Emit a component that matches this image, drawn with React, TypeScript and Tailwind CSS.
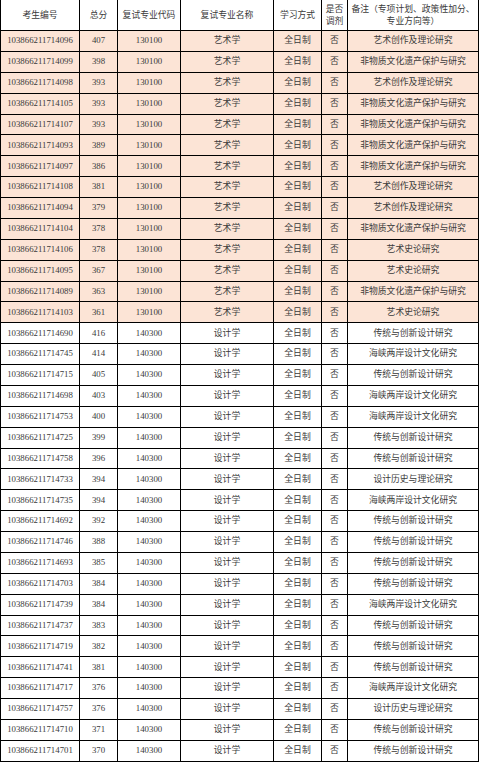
import React from 'react'

type Row = [string, string, string, string, string, string, string]

const art: Row[] = [
  ['103866211714096', '407', '130100', '艺术学', '全日制', '否', '艺术创作及理论研究'],
  ['103866211714099', '398', '130100', '艺术学', '全日制', '否', '非物质文化遗产保护与研究'],
  ['103866211714098', '393', '130100', '艺术学', '全日制', '否', '艺术创作及理论研究'],
  ['103866211714105', '393', '130100', '艺术学', '全日制', '否', '非物质文化遗产保护与研究'],
  ['103866211714107', '393', '130100', '艺术学', '全日制', '否', '非物质文化遗产保护与研究'],
  ['103866211714093', '389', '130100', '艺术学', '全日制', '否', '非物质文化遗产保护与研究'],
  ['103866211714097', '386', '130100', '艺术学', '全日制', '否', '非物质文化遗产保护与研究'],
  ['103866211714108', '381', '130100', '艺术学', '全日制', '否', '艺术创作及理论研究'],
  ['103866211714094', '379', '130100', '艺术学', '全日制', '否', '艺术创作及理论研究'],
  ['103866211714104', '378', '130100', '艺术学', '全日制', '否', '非物质文化遗产保护与研究'],
  ['103866211714106', '378', '130100', '艺术学', '全日制', '否', '艺术史论研究'],
  ['103866211714095', '367', '130100', '艺术学', '全日制', '否', '艺术史论研究'],
  ['103866211714089', '363', '130100', '艺术学', '全日制', '否', '非物质文化遗产保护与研究'],
  ['103866211714103', '361', '130100', '艺术学', '全日制', '否', '艺术史论研究'],
]

const design: Row[] = [
  ['103866211714690', '416', '140300', '设计学', '全日制', '否', '传统与创新设计研究'],
  ['103866211714745', '414', '140300', '设计学', '全日制', '否', '海峡两岸设计文化研究'],
  ['103866211714715', '405', '140300', '设计学', '全日制', '否', '传统与创新设计研究'],
  ['103866211714698', '403', '140300', '设计学', '全日制', '否', '海峡两岸设计文化研究'],
  ['103866211714753', '400', '140300', '设计学', '全日制', '否', '海峡两岸设计文化研究'],
  ['103866211714725', '399', '140300', '设计学', '全日制', '否', '传统与创新设计研究'],
  ['103866211714758', '396', '140300', '设计学', '全日制', '否', '传统与创新设计研究'],
  ['103866211714733', '394', '140300', '设计学', '全日制', '否', '设计历史与理论研究'],
  ['103866211714735', '394', '140300', '设计学', '全日制', '否', '海峡两岸设计文化研究'],
  ['103866211714692', '392', '140300', '设计学', '全日制', '否', '传统与创新设计研究'],
  ['103866211714746', '388', '140300', '设计学', '全日制', '否', '传统与创新设计研究'],
  ['103866211714693', '385', '140300', '设计学', '全日制', '否', '传统与创新设计研究'],
  ['103866211714703', '384', '140300', '设计学', '全日制', '否', '传统与创新设计研究'],
  ['103866211714739', '384', '140300', '设计学', '全日制', '否', '海峡两岸设计文化研究'],
  ['103866211714737', '383', '140300', '设计学', '全日制', '否', '传统与创新设计研究'],
  ['103866211714719', '382', '140300', '设计学', '全日制', '否', '传统与创新设计研究'],
  ['103866211714741', '381', '140300', '设计学', '全日制', '否', '传统与创新设计研究'],
  ['103866211714717', '376', '140300', '设计学', '全日制', '否', '海峡两岸设计文化研究'],
  ['103866211714757', '376', '140300', '设计学', '全日制', '否', '设计历史与理论研究'],
  ['103866211714710', '371', '140300', '设计学', '全日制', '否', '传统与创新设计研究'],
  ['103866211714701', '370', '140300', '设计学', '全日制', '否', '传统与创新设计研究'],
]

const cell = 'border border-black p-0 text-center align-middle'

const App = () => {
  return (
    <div className="w-[483px] h-[765px] bg-white overflow-hidden text-[#3a3a3a] font-['Liberation_Serif','Noto_Sans_CJK_SC',serif] text-[8.8px]">
      <table className="table-fixed border-collapse w-[478px] -mt-px">
        <colgroup>
          <col className="w-[79px]" />
          <col className="w-[38px]" />
          <col className="w-[63px]" />
          <col className="w-[93px]" />
          <col className="w-[48px]" />
          <col className="w-[26px]" />
          <col className="w-[131px]" />
        </colgroup>
        <thead>
          <tr className="h-[31px] leading-[12px]">
            <th className={cell + ' font-normal'}>考生编号</th>
            <th className={cell + ' font-normal'}>总分</th>
            <th className={cell + ' font-normal'}>复试专业代码</th>
            <th className={cell + ' font-normal'}>复试专业名称</th>
            <th className={cell + ' font-normal'}>学习方式</th>
            <th className={cell + ' font-normal'}>
              是否
              <br />
              调剂
            </th>
            <th className={cell + ' font-normal'}>
              备注（专项计划、政策性加分、
              <br />
              专业方向等）
            </th>
          </tr>
        </thead>
        <tbody>
          {art.map((r) => (
            <tr key={r[0]} className="h-[20.88px] bg-[#fce4d6]">
              {r.map((c, i) => (
                <td key={i} className={cell}>{c}</td>
              ))}
            </tr>
          ))}
          {design.map((r) => (
            <tr key={r[0]} className="h-[20.88px]">
              {r.map((c, i) => (
                <td key={i} className={cell}>{c}</td>
              ))}
            </tr>
          ))}
        </tbody>
      </table>
    </div>
  )
}

export default App
